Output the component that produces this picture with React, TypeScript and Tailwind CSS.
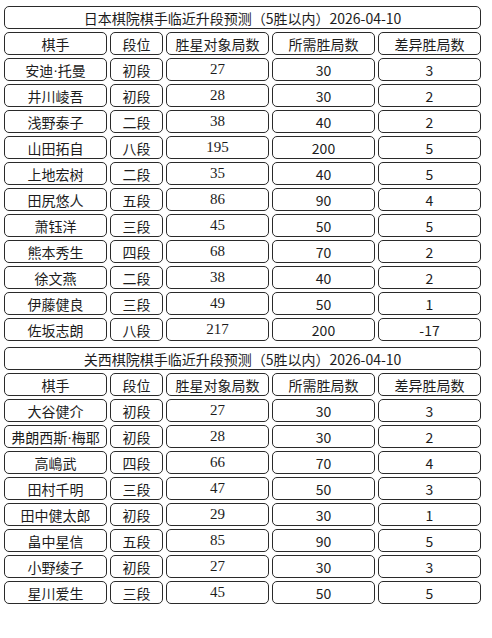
import React from "react";

type Row = [string, string, string, string, string];

const east: Row[] = [
  ["安迪·托曼", "初段", "27", "30", "3"],
  ["井川崚吾", "初段", "28", "30", "2"],
  ["浅野泰子", "二段", "38", "40", "2"],
  ["山田拓自", "八段", "195", "200", "5"],
  ["上地宏树", "二段", "35", "40", "5"],
  ["田尻悠人", "五段", "86", "90", "4"],
  ["萧钰洋", "三段", "45", "50", "5"],
  ["熊本秀生", "四段", "68", "70", "2"],
  ["徐文燕", "二段", "38", "40", "2"],
  ["伊藤健良", "三段", "49", "50", "1"],
  ["佐坂志朗", "八段", "217", "200", "-17"],
];

const west: Row[] = [
  ["大谷健介", "初段", "27", "30", "3"],
  ["弗朗西斯·梅耶", "初段", "28", "30", "2"],
  ["高嶋武", "四段", "66", "70", "4"],
  ["田村千明", "三段", "47", "50", "3"],
  ["田中健太郎", "初段", "29", "30", "1"],
  ["畠中星信", "五段", "85", "90", "5"],
  ["小野绫子", "初段", "27", "30", "3"],
  ["星川爱生", "三段", "45", "50", "5"],
];

const sans = "font-['Noto_Sans_CJK_SC','Noto_Sans',sans-serif]";
const serif = "font-['Liberation_Serif','Noto_Sans_CJK_SC',serif]";
const cell =
  "h-[23px] border border-[#2a2a2a] rounded-[5px] flex items-center justify-center text-[14px] leading-none text-[#1c1c1c] whitespace-nowrap";

function Name({ name }: { name: string }) {
  const parts = name.split("·");
  if (parts.length === 1) return <>{name}</>;
  return (
    <>
      {parts[0]}
      <span className="font-['Liberation_Sans',sans-serif]">·</span>
      {parts[1]}
    </>
  );
}

function Table({ title, rows }: { title: string; rows: Row[] }) {
  return (
    <div className="grid grid-cols-[103px_53px_103px_103px_103px] gap-[3px]">
      <div className={`${cell} ${sans} col-span-5`}>{title}</div>
      {["棋手", "段位", "胜星对象局数", "所需胜局数", "差异胜局数"].map((h) => (
        <div key={h} className={`${cell} ${sans}`}>
          {h}
        </div>
      ))}
      {rows.map((r) => (
        <React.Fragment key={r[0]}>
          <div className={`${cell} ${sans}`}>
            <Name name={r[0]} />
          </div>
          <div className={`${cell} ${sans}`}>{r[1]}</div>
          <div className={`${cell} ${serif} text-[15px]`}>{r[2]}</div>
          <div className={`${cell} ${sans}`}>{r[3]}</div>
          <div className={`${cell} ${sans}`}>{r[4]}</div>
        </React.Fragment>
      ))}
    </div>
  );
}

export default function App() {
  return (
    <div className="w-[492px] h-[638px] bg-white pl-[4px] pt-[6px] flex flex-col gap-[6px]">
      <Table title="日本棋院棋手临近升段预测（5胜以内）2026-04-10" rows={east} />
      <Table title="关西棋院棋手临近升段预测（5胜以内）2026-04-10" rows={west} />
    </div>
  );
}
